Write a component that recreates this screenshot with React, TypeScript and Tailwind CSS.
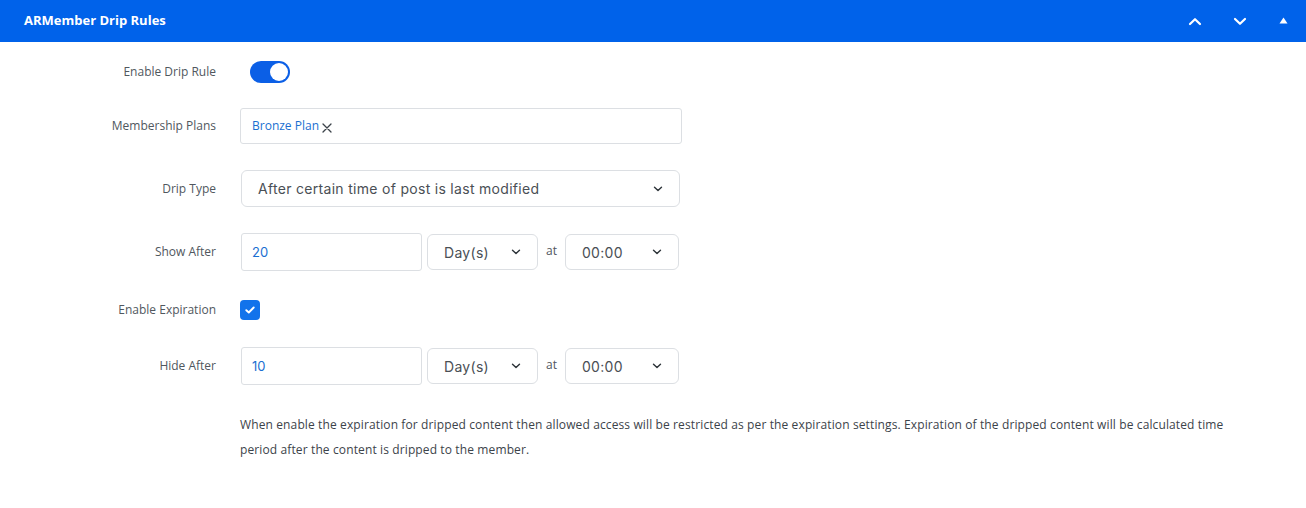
import React from "react";

const labelClass =
  "w-[216px] shrink-0 text-right text-[12px] text-[#50575e] pr-0";

function Chevron({ className = "" }: { className?: string }) {
  return (
    <svg
      width="10"
      height="6"
      viewBox="0 0 10 6"
      className={className}
      fill="none"
      stroke="#2c3338"
      strokeWidth="1.4"
      strokeLinecap="round"
      strokeLinejoin="round"
    >
      <path d="M1.5 1.2 5 4.6 8.5 1.2" />
    </svg>
  );
}

function SelectBox({
  value,
  className,
}: {
  value: string;
  className: string;
}) {
  return (
    <div
      className={[
        "flex items-center justify-between rounded-[6px] border border-[#dcdfe3] bg-white pl-4 pr-4",
        "font-['Inter',sans-serif] text-[14px] tracking-[0.3px] text-[#4a4f55]",
        className,
      ].join(" ")}
    >
      <span>{value}</span>
      <Chevron />
    </div>
  );
}

function PeriodRow({ label, amount }: { label: string; amount: string }) {
  return (
    <div className="flex items-center">
      <div className={labelClass}>{label}</div>
      <div className="ml-[24px] flex items-center">
        <div className="ml-[1px] flex h-[38px] w-[181px] items-center rounded-[3px] border border-[#dcdfe3] pl-[10px] pt-[2px] font-['Inter',sans-serif] text-[13px] text-[#1a6fd1]">
          {amount}
        </div>
        <SelectBox value="Day(s)" className="ml-[5px] h-[36px] w-[111px]" />
        <span className="mx-[8px] -mt-[3px] text-[12px] text-[#50575e]">at</span>
        <SelectBox value="00:00" className="h-[36px] w-[114px]" />
      </div>
    </div>
  );
}

export default function App() {
  return (
    <div className="h-[508px] w-[1306px] bg-white font-['Open_Sans',sans-serif]">
      <div className="flex h-[42px] items-center justify-between bg-[#0062ea] pl-[24px] pr-[18px]">
        <span className="text-[13px] font-bold text-white">
          ARMember Drip Rules
        </span>
        <div className="flex items-center">
          <svg width="14" height="9" viewBox="0 0 14 9" fill="none" stroke="white" strokeWidth="2.2" strokeLinecap="round" strokeLinejoin="round">
            <path d="M2 7 7 2.2 12 7" />
          </svg>
          <svg className="ml-[31px]" width="14" height="9" viewBox="0 0 14 9" fill="none" stroke="white" strokeWidth="2.2" strokeLinecap="round" strokeLinejoin="round">
            <path d="M2 2 7 6.8 12 2" />
          </svg>
          <svg className="ml-[32px] -mt-[2px]" width="9" height="7" viewBox="0 0 9 7" fill="white">
            <path d="M4.5 0.5 8.5 6.5H0.5Z" />
          </svg>
        </div>
      </div>

      <div className="flex flex-col pt-[19px]">
        <div className="flex h-[22px] items-center">
          <div className={labelClass}>Enable Drip Rule</div>
          <div className="ml-[34px] flex h-[22px] w-[40px] items-center justify-end rounded-full bg-[#0b5fe6] pr-[2px]">
            <div className="h-[18px] w-[18px] rounded-full bg-white" />
          </div>
        </div>

        <div className="mt-[25px] flex items-center">
          <div className={labelClass}>Membership Plans</div>
          <div className="ml-[24px] flex h-[36px] w-[442px] items-center rounded-[3px] border border-[#dcdfe3] pl-[11px]">
            <span className="text-[12px] text-[#1a6fd1]">Bronze Plan</span>
            <svg className="ml-[3px] mt-[4px]" width="10" height="10" viewBox="0 0 10 10" stroke="#3c434a" strokeWidth="1.3" strokeLinecap="round">
              <path d="M1 1 9 9M9 1 1 9" />
            </svg>
          </div>
        </div>

        <div className="mt-[26px] flex items-center">
          <div className={labelClass}>Drip Type</div>
          <SelectBox
            value="After certain time of post is last modified"
            className="ml-[25px] h-[37px] w-[439px]"
          />
        </div>

        <div className="mt-[26px]">
          <PeriodRow label="Show After" amount="20" />
        </div>

        <div className="mt-[29px] flex items-center">
          <div className={labelClass}>Enable Expiration</div>
          <div className="ml-[24px] flex h-[20px] w-[20px] items-center justify-center rounded-[4px] bg-[#1273eb]">
            <svg width="10" height="8" viewBox="0 0 10 8" fill="none" stroke="white" strokeWidth="1.9" strokeLinecap="round" strokeLinejoin="round">
              <path d="M1.3 4.2 3.8 6.5 8.7 1.5" />
            </svg>
          </div>
        </div>

        <div className="mt-[27px]">
          <PeriodRow label="Hide After" amount="10" />
        </div>

        <p className="ml-[240px] mt-[27px] w-[1000px] text-[12px] leading-[25px] tracking-[0.12px] text-[#3c434a]">
          When enable the expiration for dripped content then allowed access will be restricted as per the expiration settings. Expiration of the dripped content will be calculated time period after the content is dripped to the member.
        </p>
      </div>
    </div>
  );
}
